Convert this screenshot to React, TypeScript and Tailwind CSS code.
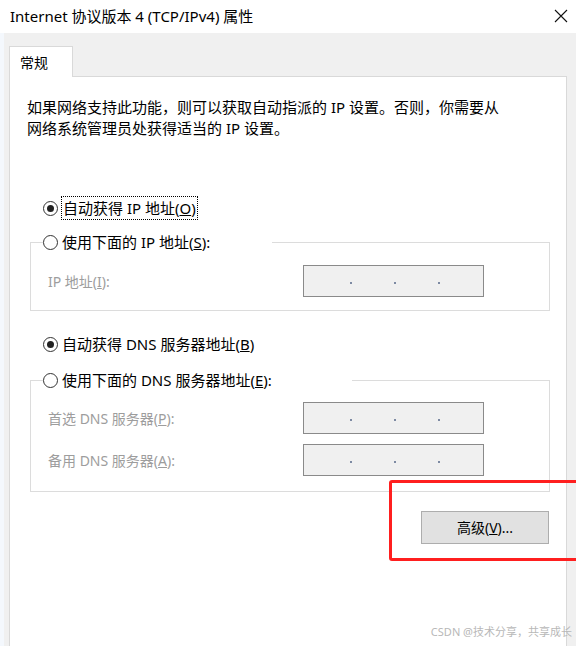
const FONT = "font-['Noto_Sans','Noto_Sans_CJK_SC',sans-serif]";

function Radio({ checked }: { checked?: boolean }) {
  return (
    <span className="flex h-[15px] w-[15px] shrink-0 items-center justify-center rounded-full border border-[#333] bg-white">
      {checked ? <span className="h-[7px] w-[7px] rounded-full bg-[#222]" /> : null}
    </span>
  );
}

function IpBox() {
  return (
    <div className="flex h-[32px] w-[181px] items-center gap-[42px] border border-[#8a8a8a] bg-[#f0f0f0] pl-[46px] pt-[3px]">
      <span className="h-[2px] w-[2px] bg-[#7d8aa3]" />
      <span className="h-[2px] w-[2px] bg-[#7d8aa3]" />
      <span className="h-[2px] w-[2px] bg-[#7d8aa3]" />
    </div>
  );
}

function Field({ label }: { label: React.ReactNode }) {
  return (
    <div className="grid grid-cols-[255px_181px] items-center">
      <span className="text-[14px] text-[#9d9d9d]">{label}</span>
      <IpBox />
    </div>
  );
}

function RadioLabel({ checked, children }: { checked?: boolean; children: React.ReactNode }) {
  return (
    <div className="flex h-[24px] items-center gap-[4px] text-[15px]">
      <Radio checked={checked} />
      <span className="whitespace-nowrap">{children}</span>
    </div>
  );
}

export default function App() {
  return (
    <div className={`relative flex h-[646px] w-[576px] flex-col overflow-hidden bg-[#f0f0f0] text-black ${FONT}`}>
      <header className="flex h-[33px] shrink-0 items-center justify-between bg-white pl-[10px] pr-[8px]">
        <span className="text-[15px]">Internet 协议版本 4 (TCP/IPv4) 属性</span>
        <svg width="14" height="14" viewBox="0 0 14 14" className="mb-[2px]">
          <path d="M1 1 L13 13 M13 1 L1 13" stroke="#111" strokeWidth="1.1" fill="none" />
        </svg>
      </header>

      <div className="flex flex-1 flex-col border-l-4 border-[#f4f8fd] pl-[5px] pr-[9px] pt-[13px]">
        <div className="relative z-10 -mb-px flex h-[31px] w-[64px] items-center border border-b-0 border-[#d9d9d9] bg-white pl-[10px] text-[14px]">
          常规
        </div>

        <div className="flex flex-1 flex-col border border-b-0 border-[#d9d9d9] bg-white">
          <p className="mt-[20px] whitespace-nowrap pl-[17px] text-[15px] leading-[21px]">
            如果网络支持此功能，则可以获取自动指派的 IP 设置。否则，你需要从
            <br />
            网络系统管理员处获得适当的 IP 设置。
          </p>

          <div className="ml-[33px] mt-[57px] flex h-[24px] items-center gap-[3px] text-[15px]">
            <Radio checked />
            <span className="flex h-[24px] items-center whitespace-nowrap border border-dotted border-black px-[1px]">
              自动获得 IP 地址(<u>O</u>)
            </span>
          </div>

          <fieldset className="ml-[20px] mr-[16px] mt-[10px] border border-[#dcdcdc] pb-[13px]">
            <legend className="ml-[12px] w-[229px]">
              <RadioLabel>
                使用下面的 IP 地址(<u>S</u>):
              </RadioLabel>
            </legend>
            <div className="pl-[17px] pt-[11px]">
              <Field label={<>IP 地址(<u>I</u>):</>} />
            </div>
          </fieldset>

          <div className="ml-[33px] mt-[21px]">
            <RadioLabel checked>
              自动获得 DNS 服务器地址(<u>B</u>)
            </RadioLabel>
          </div>

          <fieldset className="ml-[20px] mr-[16px] mt-[12px] border border-[#dcdcdc] pb-[15px]">
            <legend className="ml-[12px] w-[309px]">
              <RadioLabel>
                使用下面的 DNS 服务器地址(<u>E</u>):
              </RadioLabel>
            </legend>
            <div className="flex flex-col gap-[10px] pl-[17px] pt-[10px]">
              <Field label={<>首选 DNS 服务器(<u>P</u>):</>} />
              <Field label={<>备用 DNS 服务器(<u>A</u>):</>} />
            </div>
          </fieldset>

          <div className="mr-[17px] mt-[19px] flex justify-end">
            <button
              type="button"
              className="h-[33px] w-[128px] border border-[#adadad] bg-[#e1e1e1] text-[14px]"
            >
              高级(<u>V</u>)...
            </button>
          </div>
        </div>
      </div>

      <div className="absolute left-[389px] top-[480px] h-[81px] w-[210px] rounded-[3px] border-[3px] border-[#ff1f1f]" />

      <span className="absolute bottom-[6px] right-[4px] text-[11px] text-[#b8b8b8]">
        CSDN @技术分享，共享成长
      </span>
    </div>
  );
}
